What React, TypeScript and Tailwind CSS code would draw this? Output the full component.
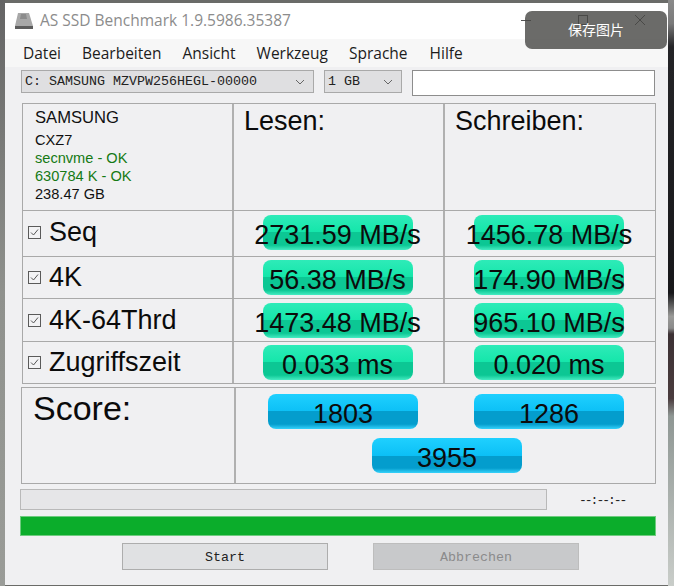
const mono = "font-['Liberation_Mono',monospace]";
const arial = "font-['Liberation_Sans',Arial,sans-serif]";

function Bar({ text, kind = 'green' }: { text: string; kind?: 'green' | 'blue' }) {
  const bg =
    kind === 'green'
      ? 'bg-[linear-gradient(#2eebb8_0%,#14e6aa_50%,#0cc794_50%,#0cc794_86%,#45ecc2_100%)]'
      : 'bg-[linear-gradient(#1fd0ff_0%,#0cc0f6_50%,#049dcd_50%,#049dcd_86%,#35d2fb_100%)]';
  return (
    <div className={`flex h-[35px] w-[150px] items-center justify-center whitespace-nowrap rounded-[8px] text-[27px] leading-none text-[#0b0b0b] ${bg}`}>
      <span className="pt-[6px]">{text}</span>
    </div>
  );
}

function Check() {
  return (
    <svg width="13" height="13" viewBox="0 0 13 13" className="shrink-0">
      <rect x="0.5" y="0.5" width="12" height="12" fill="#f2f2f4" stroke="#5a5a5a" />
      <path d="M3 6.5 L5.5 9 L10 3.5" fill="none" stroke="#555" strokeWidth="1" />
    </svg>
  );
}

function Row({ label, read, write, h, lift = '', barLift = '' }: { label: string; read: string; write: string; h: string; lift?: string; barLift?: string }) {
  return (
    <div className={`grid grid-cols-[209px_211px_1fr] border-t border-[#a9a9a9] ${h}`}>
      <div className={`flex items-center gap-[8px] pl-[5px] text-[27px] leading-none text-[#0b0b0b] ${lift}`}>
        <Check />
        <span>{label}</span>
      </div>
      <div className={`flex items-center justify-center border-l-2 border-[#b0b0b0] pr-[2px] ${barLift}`}>
        <Bar text={read} />
      </div>
      <div className={`flex items-center justify-center border-l-2 border-[#b0b0b0] pr-[2px] ${barLift}`}>
        <Bar text={write} />
      </div>
    </div>
  );
}

function Select({ text, w }: { text: string; w: string }) {
  return (
    <div className={`flex h-[23px] items-center justify-between border border-[#a9a9a9] bg-[#dfdfe1] pl-[3px] pr-[8px] text-[13.33px] text-[#222] ${mono} ${w}`}>
      <span className="whitespace-nowrap pt-[1px]">{text}</span>
      <svg width="10" height="6" viewBox="0 0 10 6">
        <path d="M1 1 L5 5 L9 1" fill="none" stroke="#666" strokeWidth="1" />
      </svg>
    </div>
  );
}

export default function App() {
  return (
    <div className={`relative flex h-[586px] w-[674px] overflow-hidden bg-[#6a6b68] ${arial}`}>
      <div className="w-[5px] shrink-0 bg-[linear-gradient(#646464,#8f918d_50%,#9a9c98)]" />
      <div className="mt-[3px] mb-[1px] flex w-[663px] shrink-0 flex-col bg-[#f0f0f2]">
        {/* Title bar */}
        <div className="flex h-[36px] shrink-0 items-center bg-white pl-[9px] font-['Open_Sans',sans-serif] text-[15.5px] text-[#8c8c8c]">
          <svg width="20" height="18" viewBox="0 0 20 18" className="mr-[6px] shrink-0">
            <path d="M4 1 H15 L19 14 V17 H1 V14 Z" fill="#a8a8a8" />
            <path d="M7 2 H12 L13 7 H6 Z" fill="#8c8c8c" />
            <rect x="1" y="14" width="18" height="3" fill="#5d5d5d" />
          </svg>
          <span className="whitespace-nowrap">AS SSD Benchmark 1.9.5986.35387</span>
        </div>
        {/* Menu */}
        <div className="flex h-[28px] shrink-0 items-center gap-[21px] bg-[#f7f7f7] pl-[18px] pt-[2px] font-['Open_Sans',sans-serif] text-[15.5px] text-[#1c1c1c]">
          <span>Datei</span>
          <span>Bearbeiten</span>
          <span>Ansicht</span>
          <span>Werkzeug</span>
          <span>Sprache</span>
          <span className="ml-[1px]">Hilfe</span>
        </div>
        {/* Selectors */}
        <div className="mt-[3px] flex h-[26px] shrink-0 items-start pl-[16px]">
          <Select text="C: SAMSUNG MZVPW256HEGL-00000" w="w-[293px]" />
          <div className="ml-[10px]">
            <Select text="1 GB" w="w-[78px]" />
          </div>
          <div className="ml-[10px] h-[26px] w-[243px] border border-[#8d8d8d] bg-white" />
        </div>
        {/* Result table */}
        <div className="ml-[17px] mt-[7px] w-[634px] shrink-0 border border-[#a9a9a9]">
          <div className="grid h-[106px] grid-cols-[209px_211px_1fr]">
            <div className="pl-[12px] pt-[4px]">
              <div className="text-[16.6px] leading-[20px] text-[#111]">SAMSUNG</div>
              <div className="mt-[3px] text-[14.6px] leading-[18px] text-[#111]">CXZ7</div>
              <div className="text-[14.6px] leading-[18px] text-[#157a15]">secnvme - OK</div>
              <div className="text-[14.6px] leading-[18px] text-[#157a15]">630784 K - OK</div>
              <div className="text-[14.6px] leading-[18px] text-[#111]">238.47 GB</div>
            </div>
            <div className="border-l-2 border-[#b0b0b0] pl-[10px] pt-[2px] text-[27px] leading-[30px] text-[#0b0b0b]">Lesen:</div>
            <div className="border-l-2 border-[#b0b0b0] pl-[10px] pt-[2px] text-[27px] leading-[30px] text-[#0b0b0b]">Schreiben:</div>
          </div>
          <Row label="Seq" read="2731.59 MB/s" write="1456.78 MB/s" h="h-[46px]" lift="pb-[2px]" barLift="pb-[2px]" />
          <Row label="4K" read="56.38 MB/s" write="174.90 MB/s" h="h-[42px]" />
          <Row label="4K-64Thrd" read="1473.48 MB/s" write="965.10 MB/s" h="h-[43px]" />
          <Row label="Zugriffszeit" read="0.033 ms" write="0.020 ms" h="h-[42px]" />
        </div>
        {/* Score table */}
        <div className="ml-[16px] mt-[3px] grid h-[97px] w-[635px] shrink-0 grid-cols-[212px_1fr] border border-[#a9a9a9]">
          <div className="pl-[11px] text-[34px] leading-[40px] text-[#0b0b0b]">Score:</div>
          <div className="flex flex-col items-center border-l-2 border-[#b0b0b0] pl-[1px] pt-[6px]">
            <div className="flex gap-[56px]">
              <Bar text="1803" kind="blue" />
              <Bar text="1286" kind="blue" />
            </div>
            <div className="mt-[9px] pl-[2px]">
              <Bar text="3955" kind="blue" />
            </div>
          </div>
        </div>
        {/* Progress */}
        <div className="ml-[15px] mt-[5px] flex h-[21px] shrink-0 items-center">
          <div className="h-[21px] w-[527px] border border-[#b9b9b9] bg-[#e6e6e8]" />
          <span className={`ml-[32px] pt-[3px] text-[13px] tracking-[-2px] text-[#222] ${mono}`}>--:--:--</span>
        </div>
        <div className="ml-[15px] mt-[6px] h-[20px] w-[636px] shrink-0 border border-[#6fcb7f] bg-[#0bad2b]" />
        {/* Buttons */}
        <div className={`ml-[117px] mt-[7px] flex shrink-0 gap-[45px] text-[13.33px] ${mono}`}>
          <div className="flex h-[27px] w-[206px] items-center justify-center border border-[#adadad] bg-[#e0e1e3] pt-[2px] text-[#222]">Start</div>
          <div className="flex h-[27px] w-[206px] items-center justify-center border border-[#bdbdbd] bg-[#c8c9cb] pt-[2px] text-[#8b8b8b]">Abbrechen</div>
        </div>
      </div>
      <div className="flex-1 bg-[linear-gradient(#8a8a8a_0%,#7a7a7a_4%,#242427_8%,#17171a_50%,#9a9a98_54%,#8a8a8a_56%,#3c3134_57%,#4a3c3e_68%,#8f9794_71%,#c9cdc9_100%)]" />
      {/* Window controls beneath the toast */}
      <div className="absolute left-[521px] top-[20px] h-px w-[10px] bg-[#555]" />
      <div className="absolute left-[578px] top-[15px] h-[10px] w-[10px] border border-[#555]" />
      <svg className="absolute left-[634px] top-[14px]" width="12" height="12" viewBox="0 0 12 12">
        <path d="M1 1 L11 11 M11 1 L1 11" stroke="#555" strokeWidth="1" />
      </svg>
      {/* Toast */}
      <div className="absolute left-[525px] top-[11px] flex h-[38px] w-[142px] items-center justify-center rounded-[7px] bg-[rgba(70,70,68,0.8)] pb-[1px] font-['Noto_Sans_CJK_SC',sans-serif] text-[14px] text-white">
        保存图片
      </div>
    </div>
  );
}
